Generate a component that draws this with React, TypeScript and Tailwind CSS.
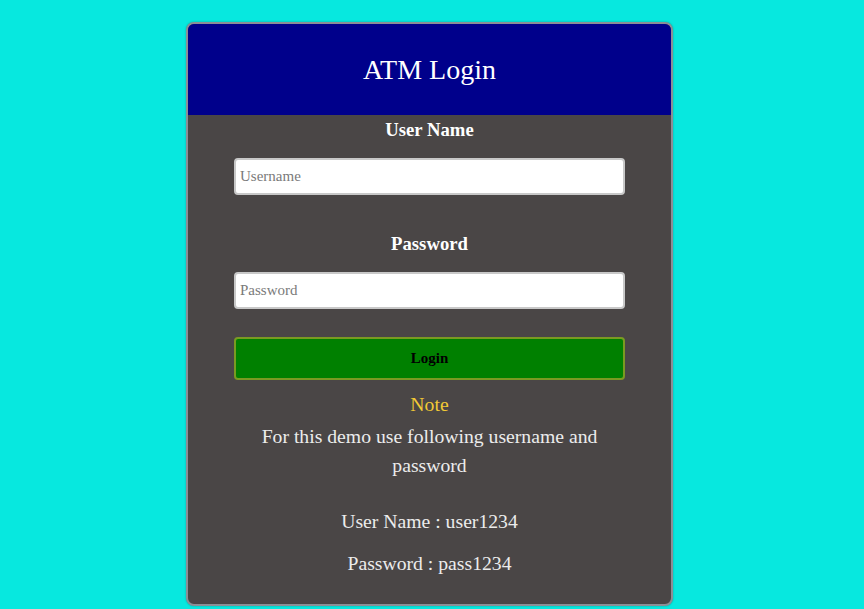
import React from "react";

export default function App() {
  const serif = { fontFamily: '"Liberation Serif", "Times New Roman", serif' };
  return (
    <div className="min-h-[609px] w-full bg-[#07e8df] flex justify-center pt-[22px] pr-[5px]" style={serif}>
      <div className="w-[487px] h-[584px] rounded-[8px] border-2 border-[#8a8f96] bg-[#4a4646] overflow-hidden flex flex-col items-center shadow-[0_0_2px_rgba(0,0,0,0.3)]">
        <div className="w-full h-[91px] bg-[#00008b] flex items-center justify-center text-white text-[28px] shrink-0">
          ATM Login
        </div>
        <div className="mt-[4px] text-white font-bold text-[18.7px] leading-[22px]">User Name</div>
        <input
          className="mt-[17px] w-[391px] h-[37px] rounded-[4px] border-2 border-[#c8c8c8] bg-white px-[4px] text-[15px] outline-none placeholder:text-[#7a7a7a]"
          style={serif}
          placeholder="Username"
        />
        <div className="mt-[38px] text-white font-bold text-[18.7px] leading-[22px]">Password</div>
        <input
          type="password"
          className="mt-[17px] w-[391px] h-[37px] rounded-[4px] border-2 border-[#c8c8c8] bg-white px-[4px] text-[15px] outline-none placeholder:text-[#7a7a7a]"
          style={serif}
          placeholder="Password"
        />
        <button
          className="mt-[28px] w-[391px] h-[43px] rounded-[4px] border-2 border-[#7a9a22] bg-[#008000] text-black font-bold text-[15px]"
          style={serif}
        >
          Login
        </button>
        <div className="mt-[12px] text-[#f2c935] text-[19.7px] leading-[24px]">Note</div>
        <p className="mt-[6px] w-[360px] text-center text-[#ececec] text-[19.7px] leading-[29px]">
          For this demo use following username and password
        </p>
        <div className="mt-[29px] text-[#ececec] text-[19.7px] leading-[24px]">User Name : user1234</div>
        <div className="mt-[18px] text-[#ececec] text-[19.7px] leading-[24px]">Password : pass1234</div>
      </div>
    </div>
  );
}
